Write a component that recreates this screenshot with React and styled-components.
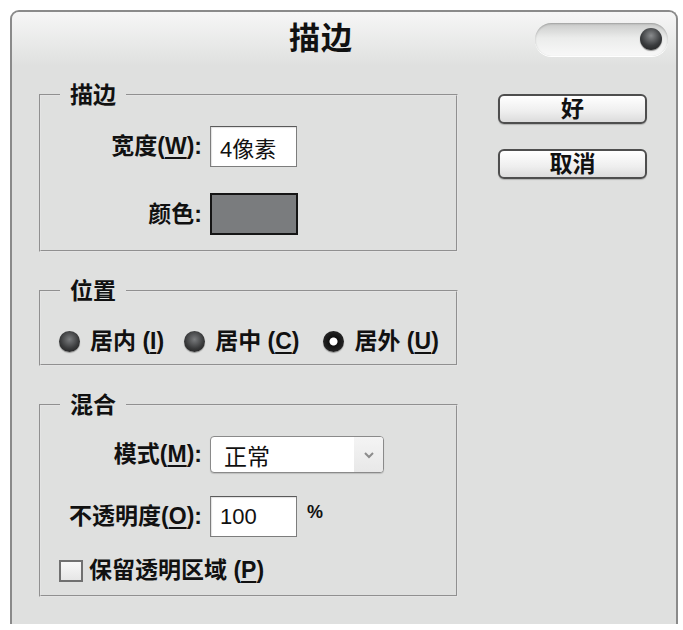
import React from "react";
import styled, { createGlobalStyle } from "styled-components";

const GlobalStyle = createGlobalStyle`
  body {
    margin: 0;
    background: #ffffff;
    font-family: "Liberation Sans", "Noto Sans CJK SC", sans-serif;
    color: #111;
  }
`;

const Window = styled.div`
  margin: 10px 0 0 10px;
  width: 668px;
  height: 614px;
  box-sizing: border-box;
  border: 2px solid #8a8a8a;
  border-bottom: none;
  border-radius: 9px 9px 0 0;
  background: #dfe0df;
  display: flex;
  flex-direction: column;
`;

const TitleBar = styled.div`
  height: 54px;
  display: grid;
  grid-template-columns: 1fr auto 1fr;
  align-items: center;
  padding-right: 8px;
  border-radius: 7px 7px 0 0;
  background: linear-gradient(#f6f6f6, #e6e7e6 70%, #dfe0df);
`;

const Title = styled.h1`
  grid-column: 2;
  margin: 0 38px 2px 0;
  font-size: 31px;
  font-weight: 700;
  line-height: 1;
  letter-spacing: 1px;
`;

const Pill = styled.div`
  grid-column: 3;
  justify-self: end;
  width: 133px;
  height: 33px;
  box-sizing: border-box;
  border-radius: 17px;
  background: linear-gradient(#c9cac9, #ebeceb 45%, #f8f8f8);
  box-shadow: inset 0 1px 2px rgba(0, 0, 0, 0.22), 0 1px 0 #fff;
  display: flex;
  align-items: center;
  justify-content: flex-end;
  padding-right: 6px;
`;

const Ball = styled.span`
  width: 22px;
  height: 22px;
  border-radius: 50%;
  background: radial-gradient(circle at 50% 35%, #8a8c8e, #3a3c3e 55%, #1a1a1a);
  box-shadow: 0 1px 1px rgba(0, 0, 0, 0.4);
`;

const Body = styled.div`
  display: flex;
  padding: 18px 0 0 27px;
`;

const Column = styled.div`
  width: 419px;
  display: flex;
  flex-direction: column;
  gap: 28px;
`;

const Group = styled.fieldset`
  margin: 0;
  padding: ${({ $pad }) => $pad};
  border: 2px groove #e4e4e4;
  min-width: 0;
`;

const Legend = styled.legend`
  margin-left: 1px;
  padding: 0 10px;
  font-size: 23px;
  line-height: 22px;
  font-weight: 700;
`;

const Form = styled.div`
  display: grid;
  grid-template-columns: 143px auto;
  column-gap: 8px;
  row-gap: ${({ $gap }) => $gap}px;
  align-items: center;
  justify-items: start;
`;

const Label = styled.span`
  justify-self: end;
  font-size: 23px;
  line-height: 27px;
  font-weight: 700;
  white-space: nowrap;
`;

const Key = styled.u`
  text-decoration-thickness: 2px;
  text-underline-offset: 3px;
`;

const TextBox = styled.div`
  width: 87px;
  height: 41px;
  box-sizing: border-box;
  border: 1px solid #7d7d7d;
  border-top-color: #5a5a5a;
  background: #fff;
  padding-left: 9px;
  font-size: 22px;
  display: flex;
  align-items: center;
  box-shadow: inset 1px 1px 1px rgba(0, 0, 0, 0.12);
`;

const Swatch = styled.div`
  width: 88px;
  height: 42px;
  box-sizing: border-box;
  border: 2px solid #151515;
  background: #7a7c7e;
`;

const InputWrap = styled.div`
  display: flex;
  align-items: center;
  gap: 10px;
`;

const Percent = styled.span`
  font-size: 18px;
  font-weight: 700;
  margin-top: -8px;
`;

const Select = styled.div`
  width: 174px;
  height: 37px;
  box-sizing: border-box;
  border: 1px solid #8a8a8a;
  border-radius: 4px;
  background: #fff;
  display: flex;
  align-items: stretch;
  box-shadow: 0 1px 1px rgba(0, 0, 0, 0.15);
  overflow: hidden;
`;

const SelectValue = styled.span`
  flex: 1;
  padding-left: 13px;
  font-size: 23px;
  display: flex;
  align-items: center;
`;

const SelectArrow = styled.span`
  width: 29px;
  background: linear-gradient(#f4f4f4, #e8e8e8);
  display: flex;
  align-items: center;
  justify-content: center;
`;

const Radios = styled.div`
  display: flex;
  align-items: center;
  gap: 20px;
`;

const Option = styled.label`
  display: flex;
  align-items: center;
  gap: 10px;
  font-size: 23px;
  line-height: 27px;
  font-weight: 700;
  white-space: nowrap;
  &:nth-child(3) {
    margin-left: 4px;
  }
`;

const Radio = styled.span`
  width: 21px;
  height: 21px;
  box-sizing: border-box;
  border-radius: 50%;
  background: ${({ $on }) =>
    $on
      ? "radial-gradient(circle, #fff 0 3.5px, #111 4.5px, #333 100%)"
      : "radial-gradient(circle at 50% 40%, #7a7c7e, #3a3b3c 55%, #151515)"};
  box-shadow: 0 1px 1px rgba(0, 0, 0, 0.35);
`;

const Check = styled.label`
  display: flex;
  align-items: center;
  gap: 6px;
  margin-top: 20px;
  font-size: 23px;
  line-height: 27px;
  font-weight: 700;
`;

const Box = styled.span`
  width: 24px;
  height: 22px;
  box-sizing: border-box;
  border: 2px solid #707070;
  background: linear-gradient(#f8f8f8, #e6e6e6);
`;

const Buttons = styled.div`
  margin: 10px 0 0 40px;
  display: flex;
  flex-direction: column;
  gap: 25px;
`;

const Button = styled.button`
  width: 149px;
  height: 30px;
  border: 2px solid #4e4e4e;
  border-radius: 6px;
  background: linear-gradient(#ffffff, #eeeeee 60%, #dcdcdc);
  font-family: inherit;
  font-size: 23px;
  font-weight: 700;
  line-height: 1;
  color: #111;
  padding: 0;
  box-shadow: 0 1px 1px rgba(0, 0, 0, 0.2);
`;

const Chevron = () => (
  <svg width="12" height="8" viewBox="0 0 12 8">
    <path d="M2 2 L6 6 L10 2" fill="none" stroke="#8c8c8c" strokeWidth="2" />
  </svg>
);

export default function App() {
  return (
    <>
      <GlobalStyle />
      <Window>
        <TitleBar>
          <Title>描边</Title>
          <Pill>
            <Ball />
          </Pill>
        </TitleBar>
        <Body>
          <Column>
            <Group $pad="20px 18px 15px">
              <Legend>描边</Legend>
              <Form $gap={26}>
                <Label>
                  宽度(<Key>W</Key>):
                </Label>
                <TextBox>4像素</TextBox>
                <Label>颜色:</Label>
                <Swatch />
              </Form>
            </Group>
            <Group $pad="26px 18px 9px">
              <Legend>位置</Legend>
              <Radios>
                <Option>
                  <Radio />
                  <span>
                    居内 (<Key>I</Key>)
                  </span>
                </Option>
                <Option>
                  <Radio />
                  <span>
                    居中 (<Key>C</Key>)
                  </span>
                </Option>
                <Option>
                  <Radio $on />
                  <span>
                    居外 (<Key>U</Key>)
                  </span>
                </Option>
              </Radios>
            </Group>
            <Group $pad="20px 18px 11px">
              <Legend>混合</Legend>
              <Form $gap={23}>
                <Label>
                  模式(<Key>M</Key>):
                </Label>
                <Select>
                  <SelectValue>正常</SelectValue>
                  <SelectArrow>
                    <Chevron />
                  </SelectArrow>
                </Select>
                <Label>
                  不透明度(<Key>O</Key>):
                </Label>
                <InputWrap>
                  <TextBox>100</TextBox>
                  <Percent>%</Percent>
                </InputWrap>
              </Form>
              <Check>
                <Box />
                <span>
                  保留透明区域 (<Key>P</Key>)
                </span>
              </Check>
            </Group>
          </Column>
          <Buttons>
            <Button>好</Button>
            <Button>取消</Button>
          </Buttons>
        </Body>
      </Window>
    </>
  );
}
